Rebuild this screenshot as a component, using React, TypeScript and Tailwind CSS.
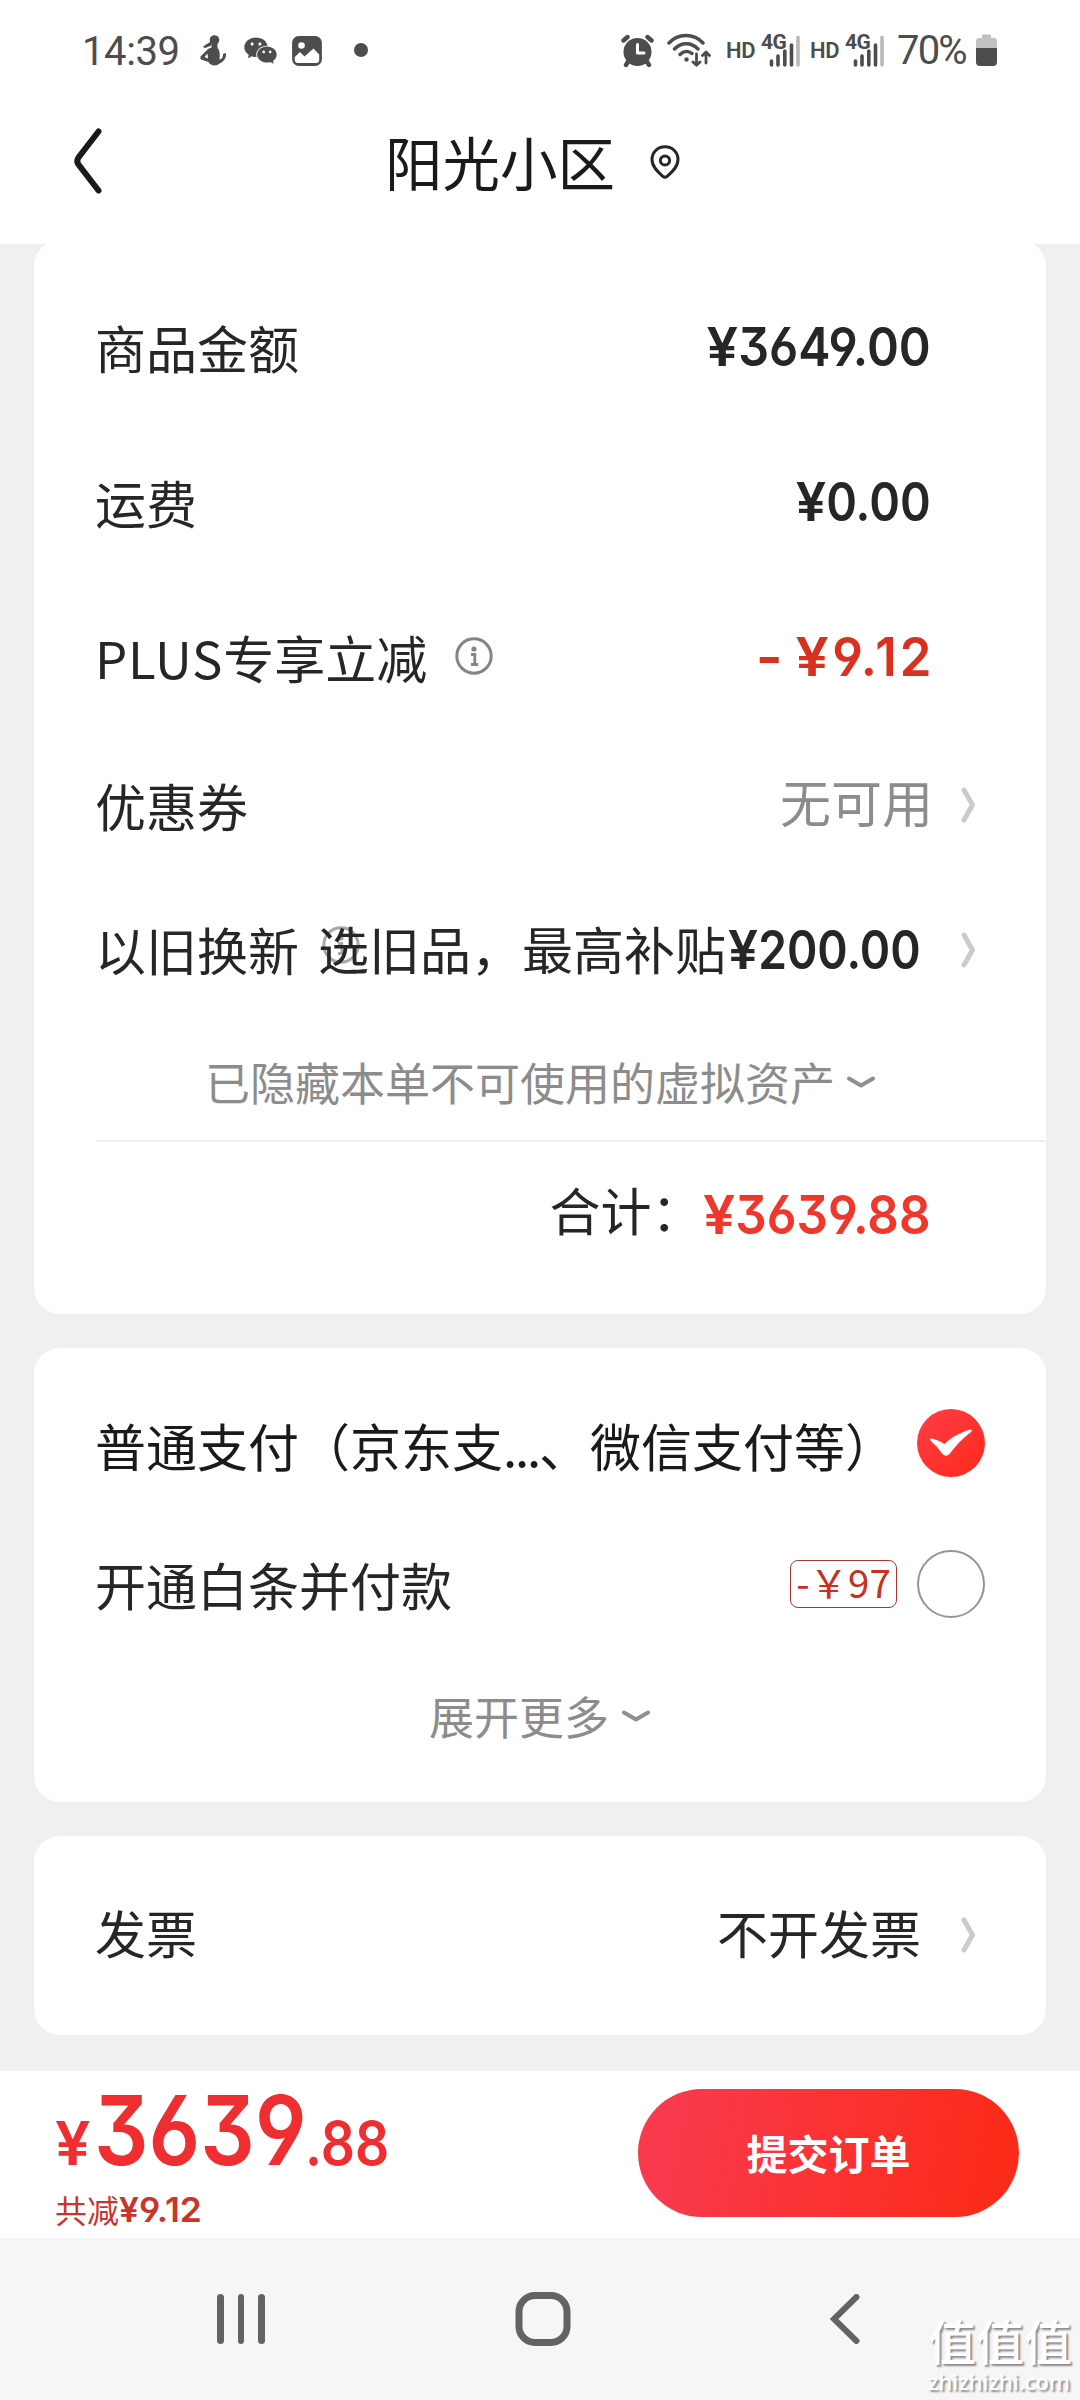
import React from "react";
import { AiFillWechat } from "react-icons/ai";

const cjk = "font-['Noto_Sans_CJK_SC',sans-serif]";
const num =
  "font-['Inter',sans-serif] font-semibold [font-feature-settings:'cv03','cv04','cv09'] whitespace-nowrap inline-block";

function Price({ amount, className = "scale-x-[0.9]" }: { amount: string; className?: string }) {
  return (
    <span className={`${num} origin-right text-[53px] leading-[60px] ${className}`}>
      <span className="inline-block origin-right scale-x-[1.16]">¥</span>
      {amount}
    </span>
  );
}

function Right({ className = "" }: { className?: string }) {
  return (
    <svg width="15" height="36" viewBox="0 0 15 36" fill="none" className={className}>
      <path d="M3 3 L11.5 18 L3 33" stroke="#cbcbcb" strokeWidth="5" strokeLinecap="round" strokeLinejoin="round" />
    </svg>
  );
}

function Down({ className = "" }: { className?: string }) {
  return (
    <svg width="28" height="13" viewBox="0 0 28 13" fill="none" className={className}>
      <path d="M2 2.5 L14 9.5 L26 2.5" stroke="#8f8f8f" strokeWidth="4" strokeLinecap="round" strokeLinejoin="round" />
    </svg>
  );
}

function Info({ className = "" }: { className?: string }) {
  return (
    <svg width="38" height="38" viewBox="0 0 38 38" fill="none" className={className}>
      <circle cx="19" cy="19" r="17.2" stroke="#858585" strokeWidth="3" />
      <circle cx="19" cy="12" r="2.6" fill="#858585" />
      <path d="M16 17.5 H19.8 V27 M16 27.5 H23" stroke="#858585" strokeWidth="2.8" />
    </svg>
  );
}

function Signal() {
  return (
    <div className="relative h-[36px] w-[40px]">
      <span className="absolute left-0 top-[-1px] font-['Roboto',sans-serif] text-[21px] font-bold leading-[20px] tracking-[-0.5px] text-[#4d4d4d]">
        4G
      </span>
      <svg width="32" height="34" viewBox="0 0 32 34" className="absolute left-[8px] top-[1px]" strokeLinecap="round" strokeWidth="3.6">
        <path d="M2.5 27 V31 M9 22 V31 M15.8 17 V31 M22.5 11 V31" stroke="#4d4d4d" />
        <path d="M29 3.5 V31" stroke="#b9b9b9" />
      </svg>
    </div>
  );
}

function StatusBar() {
  return (
    <div className="flex h-[100px] items-center text-[#4d4d4d]">
      <span className="ml-[82px] mt-[4px] w-[98px] font-['Roboto',sans-serif] text-[40px] leading-[48px] tracking-[-0.4px]">14:39</span>
      <svg width="27" height="32" viewBox="0 0 27 32" fill="#4d4d4d" className="ml-[20px] mt-[1px]">
        <circle cx="14.5" cy="5" r="4.8" />
        <path d="M11 6.5 L6 9.5 L2.8 12 L5 13 L11.5 10.5 Z" />
        <path d="M11.5 9 H17.5 L17.5 13 C20 15 20 20 19.5 24.5 C22 24 23 22.5 23 19.5 Q23.5 17.5 26 18.5 C26.5 24 22.5 27 19.5 28.5 C17 31.5 10 31 8.5 27 L1 24.5 Q-0.5 23 1 21 L8 14 L11.5 12.5 Z M7.5 18.5 L4.5 22 L8 23.5 Z" fillRule="evenodd" />
      </svg>
      <AiFillWechat className="ml-[15px] size-[37px]" />
      <svg width="30" height="30" viewBox="0 0 30 30" className="ml-[13px] mt-[1px]">
        <rect x="1.3" y="1.3" width="27.4" height="27.4" rx="5.5" fill="#4d4d4d" stroke="#4d4d4d" strokeWidth="2.4" />
        <circle cx="9.5" cy="9.5" r="3.3" fill="#fff" />
        <path d="M2.8 21 L8 16 L12.5 20.5 L21.5 12.5 L27.2 18.5 V24 Q27.2 27 24 27 H6 Q2.8 27 2.8 24 Z" fill="#fff" />
      </svg>
      <span className="ml-[32px] size-[14px] rounded-full bg-[#4d4d4d]" />
      <svg width="33" height="34" viewBox="0 0 33 34" className="ml-[253px] mt-[1px]">
        <g stroke="#4d4d4d" strokeLinecap="round" strokeWidth="4.4">
          <path d="M2.5 6.5 L6.5 3 M30.5 6.5 L26.5 3 M7.5 27 L5 31 M25.5 27 L28 31" />
        </g>
        <circle cx="16.5" cy="18" r="14" fill="#4d4d4d" />
        <path d="M16.5 10.5 V19 H23" stroke="#fff" strokeWidth="3" fill="none" strokeLinecap="round" strokeLinejoin="round" />
      </svg>
      <svg width="44" height="36" viewBox="0 0 44 36" fill="none" stroke="#4d4d4d" strokeWidth="3.4" strokeLinecap="round" strokeLinejoin="round" className="ml-[13px]">
        <path d="M2 11 C11 1 27 1 36 11 M7.5 17 C14 10 24.5 10 31 17 M13 22.5 C17 18.5 21.5 18.5 25 21.5" />
        <circle cx="19.5" cy="27.5" r="2.2" fill="#4d4d4d" stroke="none" />
        <path d="M29.5 22 V33 M26 30 L29.5 33.2 L33 30 M39 31 V20.5 M35.5 23.5 L39 20 L42.5 23.5" strokeWidth="2.8" />
      </svg>
      <span className="ml-[15px] mt-[1px] w-[29px] font-['Roboto',sans-serif] text-[22px] font-semibold leading-none tracking-[-0.3px]">HD</span>
      <div className="ml-[6px] mt-[2px]">
        <Signal />
      </div>
      <span className="ml-[9px] mt-[1px] w-[29px] font-['Roboto',sans-serif] text-[22px] font-semibold leading-none tracking-[-0.3px]">HD</span>
      <div className="ml-[6px] mt-[2px]">
        <Signal />
      </div>
      <span className="ml-[12px] mt-[2px] w-[73px] font-['Roboto',sans-serif] text-[40px] font-normal leading-[48px] tracking-[-1.8px]">70%</span>
      <svg width="21" height="33" viewBox="0 0 21 33" className="ml-[6px] mt-[1px]">
        <path d="M6 1.5 Q6 0.5 7 0.5 H14 Q15 0.5 15 1.5 V4 H18 Q21 4 21 7 V14 H0 V7 Q0 4 3 4 H6 Z" fill="#c1c1c1" />
        <path d="M0 14 H21 V28 Q21 32 17 32 H4 Q0 32 0 28 Z" fill="#4d4d4d" />
      </svg>
    </div>
  );
}

function Row({ label, children, className }: { label: React.ReactNode; children: React.ReactNode; className: string }) {
  return (
    <div className={`flex items-center justify-between pl-[61px] ${className}`}>
      <div className="flex items-center text-[51px] leading-[60px] text-[#262626]">{label}</div>
      <div className="flex items-center">{children}</div>
    </div>
  );
}

export default function App() {
  return (
    <div className={`flex h-[2400px] w-[1080px] flex-col overflow-hidden bg-[#f0f0f0] ${cjk}`}>
      <div className="relative z-10 h-[244px] shrink-0 bg-white">
        <StatusBar />
        <div className="flex h-[122px] items-center">
          <svg width="32" height="70" viewBox="0 0 32 70" fill="none" className="ml-[72px]">
            <path d="M26.5 5.5 L6.5 31.5 Q4 35 6.5 38.5 L26.5 64.5" stroke="#1a1a1a" strokeWidth="6" strokeLinecap="round" />
          </svg>
          <h1 className="ml-[281px] mt-[-1px] w-[230px] whitespace-nowrap text-[57.5px] leading-[70px] text-[#1a1a1a]">阳光小区</h1>
          <svg width="30" height="34" viewBox="0 0 30 34" fill="none" stroke="#262626" strokeWidth="3" strokeLinejoin="round" className="ml-[35px] mt-[2px]">
            <path d="M15 1.8 C7.5 1.8 2 7.5 2 14.5 C2 22 8.5 27.5 13 31.5 Q15 33 17 31.5 C21.5 27.5 28 22 28 14.5 C28 7.5 22.5 1.8 15 1.8 Z" />
            <circle cx="15" cy="15.5" r="4.6" />
          </svg>
        </div>
      </div>

      <div className="mx-[34px] mt-[-4px] flex h-[1074px] shrink-0 flex-col rounded-[26px] bg-white pt-[57px]">
        <Row label="商品金额" className="h-[100px] pr-[115px]">
          <Price amount="3649.00" className="scale-x-[0.913] text-[#262626]" />
        </Row>
        <Row label="运费" className="mt-[55px] h-[100px] pr-[115px]">
          <Price amount="0.00" className="scale-x-[0.88] text-[#262626]" />
        </Row>
        <Row
          label={
            <>
              <span className="tracking-[0.8px]">PLUS</span>专享立减
              <Info className="ml-[28px] mt-[-2px]" />
            </>
          }
          className="mt-[55px] h-[100px] pr-[115px]"
        >
          <span className={`${num} mr-[12px] text-[58px] leading-[60px] text-[#d9301f]`}>-</span>
          <Price amount="9.12" className="mr-[-3px] scale-x-[0.96] tracking-[3px] text-[#d9301f]" />
        </Row>
        <Row label="优惠券" className="mt-[48px] h-[100px] pr-[70px]">
          <span className="mt-[-9px] text-[51px] leading-[60px] text-[#8c8c8c]">无可用</span>
          <Right className="ml-[28px]" />
        </Row>
        <div className="mt-[43px] flex h-[100px] items-center pl-[61px] pr-[70px] text-[51px] leading-[60px] text-[#262626]">
          <span className="mt-[2px] w-[223px]">以旧换新</span>
          <div className="relative flex w-[603px] shrink-0 items-center whitespace-nowrap">
            <Info className="absolute left-[4px] top-[10px] opacity-70" />
            <span className="relative mt-[-1px] w-[409px] shrink-0">选旧品，最高补贴</span>
            <span className="mt-[4px] flex w-[194px] shrink-0 justify-end">
              <Price amount="200.00" className="scale-x-[0.87]" />
            </span>
          </div>
          <Right className="ml-auto mt-[4px] shrink-0" />
        </div>
        <div className="mt-[49px] flex h-[70px] items-center pl-[171px] text-[45px] leading-[60px] text-[#8c8c8c]">
          <span>已隐藏本单不可使用的虚拟资产</span>
          <Down className="ml-[12px]" />
        </div>
        <div className="ml-[62px] mt-[23px] h-[2px] bg-[#f0f0f0]" />
        <div className="mt-[17px] flex h-[100px] items-center justify-end pr-[115px] text-[51px] text-[#262626]">
          <span className="mr-[-11px]">合计：</span>
          <div className="mt-[11px] flex">
            <Price amount="3639.88" className="scale-x-[0.931] text-[#ef382b]" />
          </div>
        </div>
      </div>

      <div className="mx-[34px] mt-[34px] flex h-[454px] shrink-0 flex-col rounded-[26px] bg-white pt-[45px]">
        <div className="flex h-[100px] items-center pl-[61px] text-[51px] leading-[60px] text-[#1a1a1a]">
          <span className="mt-[4px] w-[822px] whitespace-nowrap">
            普通支付（京东支<span className="tracking-[-2.2px]">...</span>、微信支付等）
          </span>
          <svg width="68" height="68" viewBox="0 0 68 68">
            <defs>
              <linearGradient id="tick" x1="0" y1="0" x2="1" y2="1">
                <stop offset="0" stopColor="#ff3d4a" />
                <stop offset="1" stopColor="#ff2a18" />
              </linearGradient>
            </defs>
            <circle cx="34" cy="34" r="34" fill="url(#tick)" />
            <path d="M13.5 31.5 Q12 29 15 29.5 Q22.5 31.5 27.5 35 Q37 25.5 53 20.5 Q56 20.5 54 23 Q43 31 32.5 45 Q29 48.5 25.5 45 Q20.5 37.5 13.5 31.5 Z" fill="#fff" />
          </svg>
        </div>
        <div className="mt-[41px] flex h-[100px] items-center pl-[61px] text-[51px] leading-[60px] text-[#262626]">
          <span className="w-[695px]">开通白条并付款</span>
          <span className="flex h-[48px] w-[107px] items-center justify-center whitespace-nowrap rounded-[8px] border border-[#a8352b] text-[38.5px] leading-[44px] text-[#c5321f]">
            <span className="mt-[-7px]">-￥97</span>
          </span>
          <span className="ml-[20px] size-[68px] rounded-full border-2 border-[#949494]" />
        </div>
        <div className="mt-[47px] flex h-[70px] items-center pl-[395px] text-[45px] leading-[60px] text-[#8c8c8c]">
          <span>展开更多</span>
          <Down className="ml-[13px]" />
        </div>
      </div>

      <div className="mx-[34px] mt-[34px] flex h-[199px] shrink-0 items-center rounded-[26px] bg-white pl-[61px] pr-[70px] text-[51px] leading-[60px] text-[#262626]">
        <span className="mt-[-8px]">发票</span>
        <span className="ml-auto mt-[-8px]">不开发票</span>
        <Right className="ml-[40px] mt-[-1px]" />
      </div>

      <div className="mt-[36px] flex h-[167px] shrink-0 items-start bg-white">
        <div className="ml-[55px] w-[583px]">
          <div className="mt-[9px] flex h-[100px] w-[400px] items-baseline text-[#ef2e32]">
            <span className={`${num} w-[39px] origin-left scale-x-[1.05] text-[60px] leading-[100px]`}>¥</span>
            <span className={`${num} w-[211px] origin-left scale-x-[0.892] text-[96px] leading-[100px]`}>3639</span>
            <span className={`${num} origin-left scale-x-[0.892] text-[60px] leading-[100px]`}>.88</span>
          </div>
          <div className="mt-[8px] flex items-center text-[32px] leading-[40px] text-[#cc3329]">
            <span>共减</span>
            <span className={`${num} mt-[2px] origin-left scale-x-[1.04] text-[34px] leading-[40px]`}>¥9.12</span>
          </div>
        </div>
        <button className="mt-[18px] h-[128px] w-[381px] rounded-full bg-linear-[100deg,#f93a4c_10%,#fb2b1a_90%] pb-[3px] text-[41px] font-bold leading-[60px] text-white">
          提交订单
        </button>
      </div>

      <div className="relative flex h-[162px] items-start bg-[#f6f6f6] pt-[54px]">
        <div className="ml-[217px] mt-[2px] flex gap-[14px]">
          <span className="h-[50px] w-[6.5px] rounded-full bg-[#636363]" />
          <span className="h-[50px] w-[6.5px] rounded-full bg-[#636363]" />
          <span className="h-[50px] w-[6.5px] rounded-full bg-[#636363]" />
        </div>
        <svg width="56" height="54" viewBox="0 0 56 54" fill="none" className="ml-[250px]">
          <rect x="4" y="3.5" width="48" height="47" rx="16" stroke="#636363" strokeWidth="7" />
        </svg>
        <svg width="30" height="50" viewBox="0 0 30 50" fill="none" className="ml-[259px] mt-[2px]">
          <path d="M26.5 3 L4 25 L26.5 47" stroke="#636363" strokeWidth="6" strokeLinecap="round" />
        </svg>
        <div className="absolute left-[928px] top-[78px] flex flex-col whitespace-nowrap text-white [text-shadow:2px_2px_2px_#8a8a8a]">
          <span className="text-[48px] font-medium leading-[46px]">值值值</span>
          <span className="mt-[6px] font-['Noto_Sans',sans-serif] text-[22px] font-medium leading-[26px]">zhizhizhi.com</span>
        </div>
      </div>
    </div>
  );
}
